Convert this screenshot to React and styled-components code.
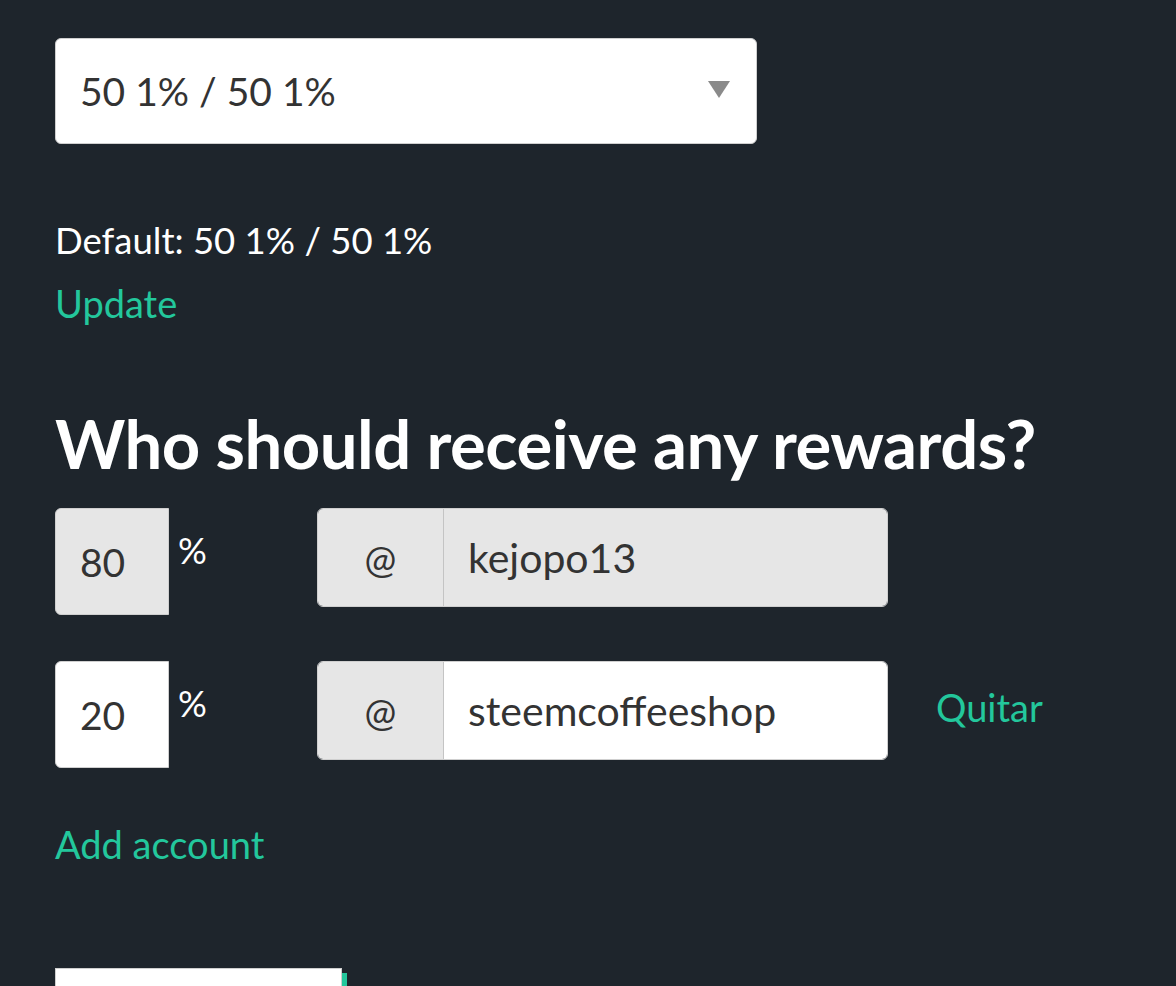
import styled, { createGlobalStyle } from 'styled-components'

const GlobalStyle = createGlobalStyle`
  html, body {
    margin: 0;
    background: #1e252c;
    font-family: Lato, "Open Sans", sans-serif;
  }
`

const teal = '#23c79c'

const Page = styled.div`
  padding: 38px 0 0 55px;
  height: 948px;
  overflow: hidden;
  color: #fff;
`

const SelectBox = styled.div`
  width: 702px;
  height: 106px;
  box-sizing: border-box;
  background: #fff;
  border: 1px solid #cfcfcf;
  border-radius: 6px;
  display: flex;
  align-items: center;
  justify-content: space-between;
  padding: 0 26px 0 24px;
  font-size: 39px;
  color: #333;
`

const Caret = styled.span`
  width: 0;
  height: 0;
  border-left: 11px solid transparent;
  border-right: 11px solid transparent;
  border-top: 17px solid #8a8a8a;
  margin-top: -4px;
`

const DefaultText = styled.div`
  margin-top: 72px;
  font-size: 36.5px;
  line-height: 48px;
`

const Link = styled.a`
  color: ${teal};
  font-size: 38px;
  line-height: 48px;
  cursor: pointer;
`

const UpdateLink = styled(Link)`
  display: block;
  margin-top: 15px;
`

const Heading = styled.h2`
  margin: 76px 0 25px;
  font-size: 67px;
  line-height: 80px;
  font-weight: 700;
  letter-spacing: -0.5px;
`

const Rows = styled.div`
  display: flex;
  flex-direction: column;
  gap: 46px;
`

const Row = styled.div`
  display: flex;
  align-items: flex-start;
`

const PercentInput = styled.div`
  width: 114px;
  height: 107px;
  box-sizing: border-box;
  background: ${p => (p.$disabled ? '#e6e6e6' : '#fff')};
  border: 1px solid #cfcfcf;
  border-radius: 6px 0 0 6px;
  display: flex;
  align-items: center;
  padding-left: 24px;
  font-size: 39px;
  color: #333;
`

const PercentSign = styled.span`
  width: 139px;
  padding: 22px 0 0 9px;
  font-size: 36px;
  line-height: 40px;
`

const Group = styled.div`
  display: flex;
  width: 571px;
  height: 99px;
  box-sizing: border-box;
  border: 1px solid #cfcfcf;
  border-radius: 6px;
  overflow: hidden;
  font-size: 41px;
  color: #333;
`

const Addon = styled.div`
  width: 125px;
  background: #e6e6e6;
  border-right: 1px solid #c4c4c4;
  display: flex;
  align-items: center;
  justify-content: center;
  font-size: 38px;
`

const Field = styled.div`
  flex: 1;
  background: ${p => (p.$disabled ? '#e6e6e6' : '#fff')};
  display: flex;
  align-items: center;
  padding-left: 24px;
`

const RemoveLink = styled(Link)`
  margin: 22px 0 0 48px;
`

const AddLink = styled(Link)`
  display: block;
  margin-top: 52px;
`

const SubmitButton = styled.div`
  margin-top: 100px;
  width: 285px;
  height: 60px;
  background: #fff;
  border: 1px solid #cfcfcf;
  box-shadow: 5px 5px 0 ${teal};
`

function RewardRow({ percent, account, disabled, removable }) {
  return (
    <Row>
      <PercentInput $disabled={disabled}>{percent}</PercentInput>
      <PercentSign>%</PercentSign>
      <Group>
        <Addon>@</Addon>
        <Field $disabled={disabled}>{account}</Field>
      </Group>
      {removable && <RemoveLink>Quitar</RemoveLink>}
    </Row>
  )
}

export default function App() {
  return (
    <>
      <GlobalStyle />
      <Page>
        <SelectBox>
          <span>50 1% / 50 1%</span>
          <Caret />
        </SelectBox>
        <DefaultText>Default: 50 1% / 50 1%</DefaultText>
        <UpdateLink>Update</UpdateLink>
        <Heading>Who should receive any rewards?</Heading>
        <Rows>
          <RewardRow percent="80" account="kejopo13" disabled />
          <RewardRow percent="20" account="steemcoffeeshop" removable />
        </Rows>
        <AddLink>Add account</AddLink>
        <SubmitButton />
      </Page>
    </>
  )
}
